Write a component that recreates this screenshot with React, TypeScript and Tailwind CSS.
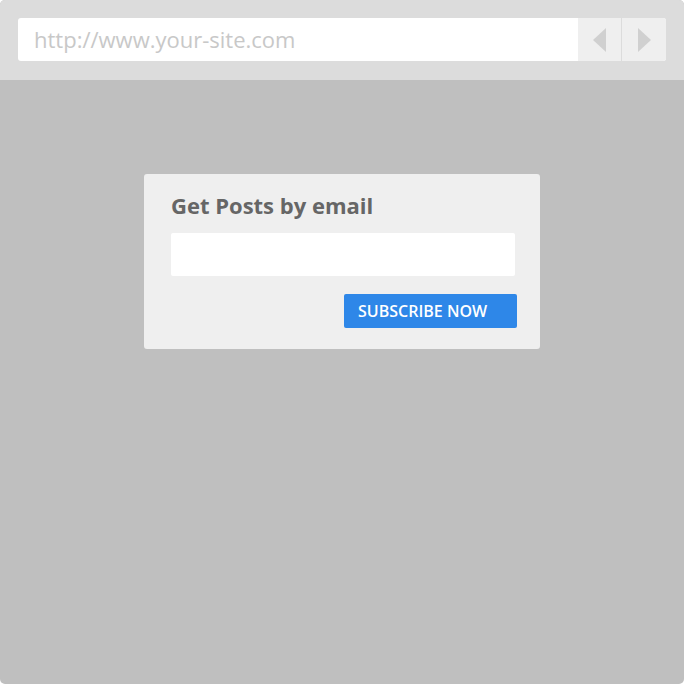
import React from "react";

const font = { fontFamily: '"Open Sans", "Noto Sans", sans-serif' };

const App: React.FC = () => {
  return (
    <div className="w-[684px] h-[684px] bg-white" style={font}>
      <div className="w-full h-full rounded-[5px] overflow-hidden bg-[#bfbfbf] flex flex-col">
        {/* browser bar */}
        <div className="h-[80px] bg-[#dcdcdc] px-[18px] pt-[18px]">
          <div className="h-[43px] bg-white rounded-[3px] flex overflow-hidden">
            <div className="flex-1 flex items-center pl-[16px] text-[22px] text-[#c8c8c8]">
              http://www.your-site.com
            </div>
            <div className="w-[44px] bg-[#efefef] flex items-center justify-center border-r border-[#dcdcdc]">
              <svg width="14" height="24" viewBox="0 0 14 24">
                <path d="M13 0 L0 12 L13 24 Z" fill="#d0d0d0" />
              </svg>
            </div>
            <div className="w-[44px] bg-[#efefef] flex items-center justify-center">
              <svg width="14" height="24" viewBox="0 0 14 24">
                <path d="M1 0 L14 12 L1 24 Z" fill="#d0d0d0" />
              </svg>
            </div>
          </div>
        </div>

        {/* subscribe card */}
        <div className="ml-[144px] mt-[94px] w-[396px] h-[175px] bg-[#efefef] rounded-[3px] pl-[27px] pt-[16px]">
          <h2 className="text-[22px] font-bold text-[#666666] leading-[30px]">Get Posts by email</h2>
          <div className="mt-[13px] w-[344px] h-[43px] bg-white rounded-[2px]" />
          <div className="mt-[18px] w-[346px] flex justify-end">
            <button className="w-[173px] h-[34px] bg-[#2e87e8] rounded-[2px] text-white text-[16px] font-semibold text-left pl-[14px]">
              SUBSCRIBE NOW
            </button>
          </div>
        </div>
      </div>
    </div>
  );
};

export default App;
